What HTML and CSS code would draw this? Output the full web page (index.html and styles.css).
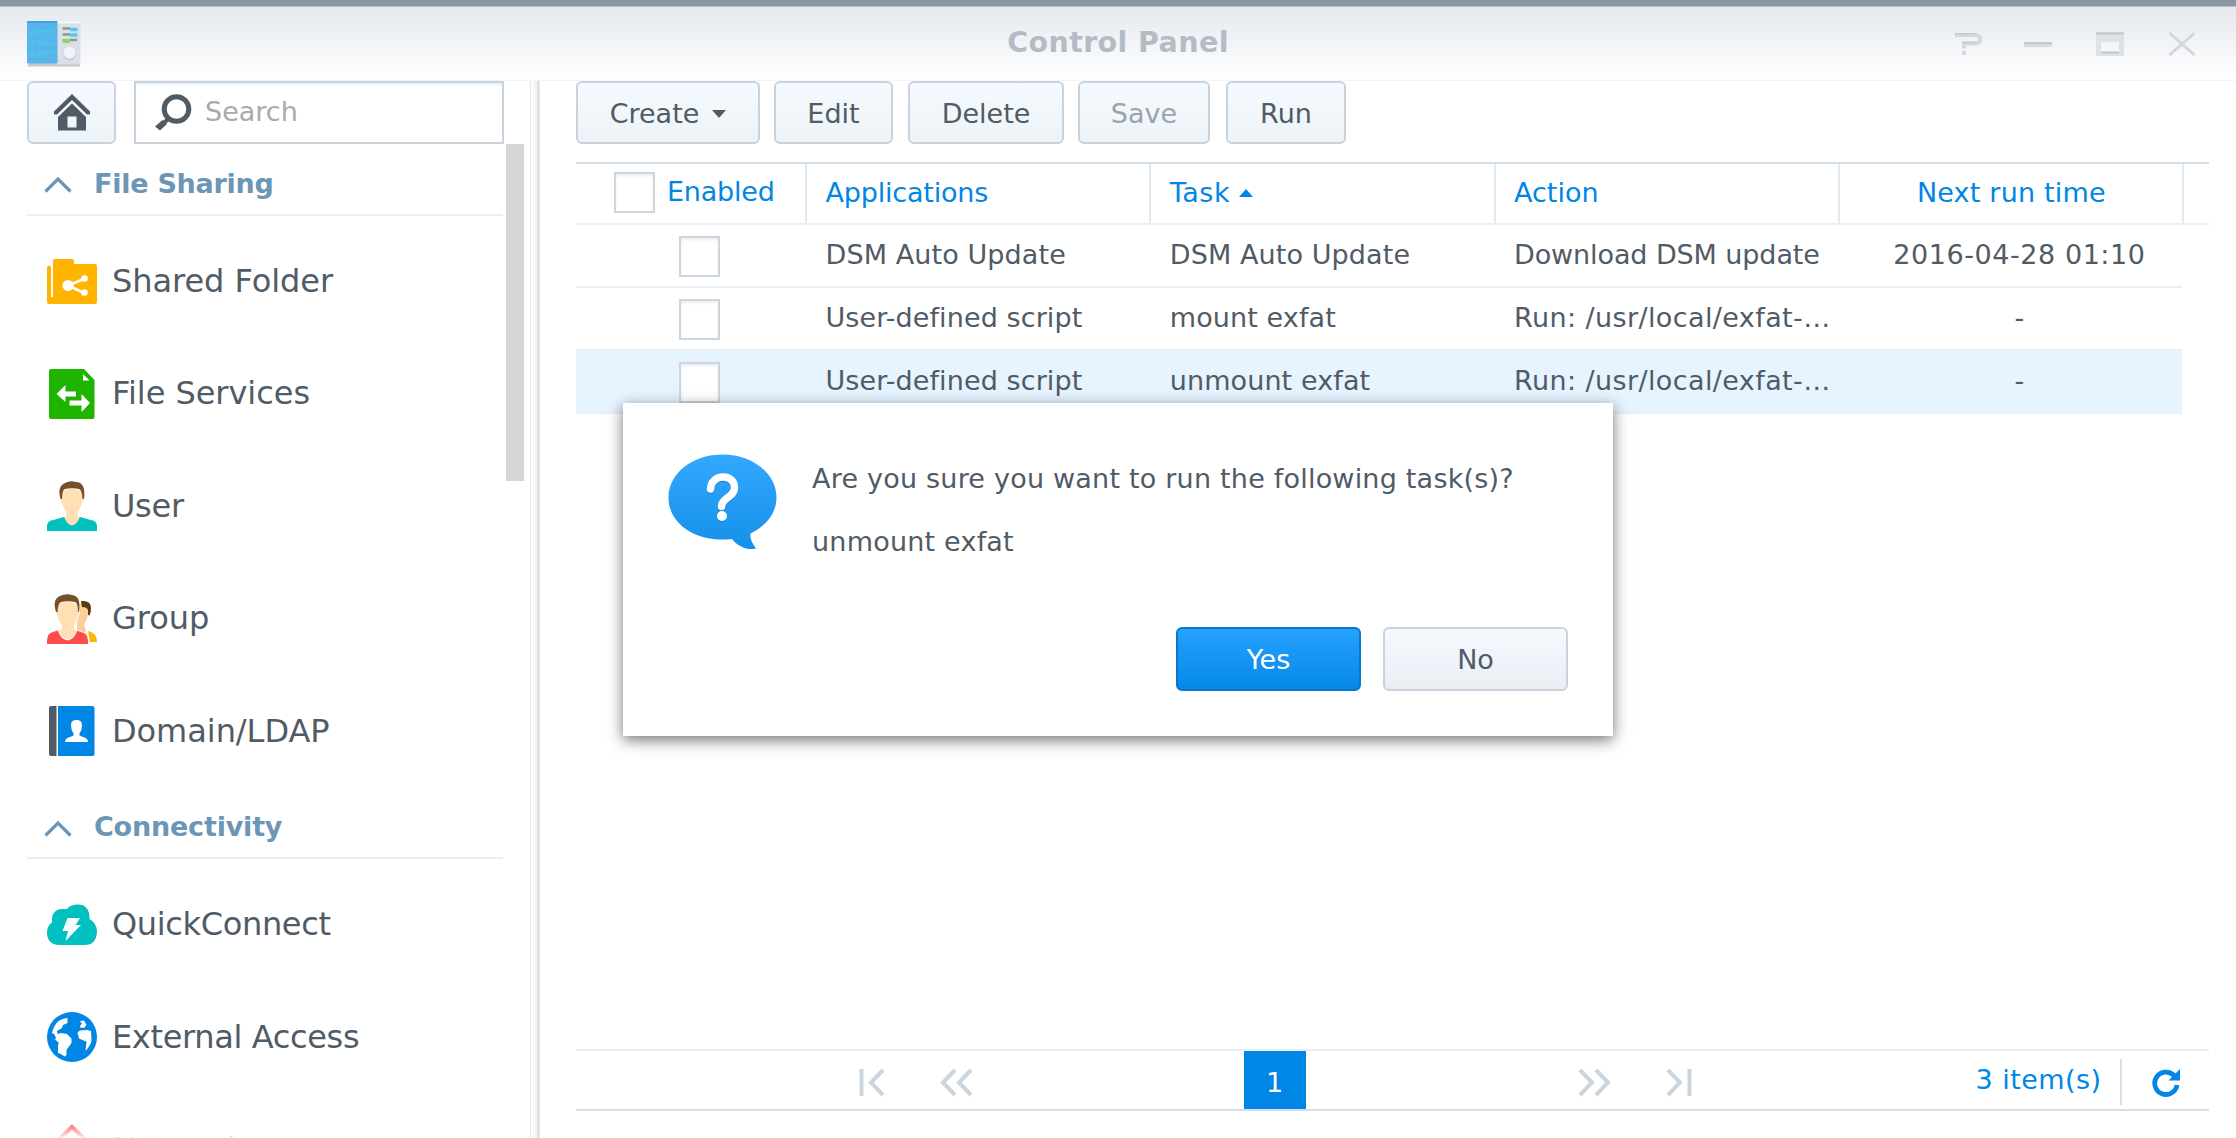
FILE: index.html
```html
<!DOCTYPE html>
<html lang="en">
<head>
<meta charset="utf-8">
<title>Control Panel</title>
<link rel="stylesheet" href="styles.css">
</head>
<body>
<header class="titlebar">
  <svg class="app-icon" viewBox="0 0 54 47">
    <rect x="1" y="43" width="52" height="3.500" rx="1.500" fill="#c3c6ca"/>
    <rect x="28" y="2" width="25.500" height="42.500" rx="1.500" fill="#dbe0e7"/>
    <rect x="28" y="1.500" width="25" height="2" fill="#f7f8fa"/>
    <rect x="0" y="1" width="30.500" height="42.500" rx="1" fill="#5ab4ec"/>
    <path d="M0 2h30" stroke="#41a3df" stroke-width="2"/>
    <g stroke="#45cbe8" stroke-width="1.600" fill="none">
      <path d="M2.500 12.500l2 2 3-4M10 11.500h16M10 14.500h6M2.500 22.500l2 2 3-4M10 21.500h11M10 24h16M10 35h6M10 32.500h16"/>
      <circle cx="4.500" cy="33.500" r="2"/>
    </g>
    <path d="M35.500 8.500h8M35.500 14.500h8M42.500 20h7.500" stroke="#8b96a1" stroke-width="2.600"/>
    <path d="M43 9.500h7.500M43 15h7.500" stroke="#4fcbe8" stroke-width="3.500"/>
    <path d="M35.500 21h7" stroke="#85d95f" stroke-width="4"/>
    <circle cx="42.500" cy="34" r="6.300" fill="#c3c9d0"/>
    <circle cx="42.500" cy="32.800" r="6" fill="#f0f4fa"/>
  </svg>
  <h1 class="title">Control Panel</h1>
  <div class="window-controls">
    <svg class="control" viewBox="0 0 28 24"><path d="M1 3h20a5 4 0 0 1 0 8.500H10v5M10 19v4" stroke="#d5d9dd" stroke-width="4" fill="none"/><path d="M1 1.800h20M8 10.500h13" stroke="#c3c7cb" stroke-width="1.600"/></svg>
    <svg class="control" viewBox="0 0 28 24"><path d="M0 12.500h28" stroke="#d9dcdf" stroke-width="5"/><path d="M0 11.200h28" stroke="#c3c7cb" stroke-width="2"/></svg>
    <svg class="control" viewBox="0 0 28 24"><path d="M0 0h28v24H0zM5 10v10h18V10z" fill="#dfe2e5" fill-rule="evenodd"/><path d="M0 1.500h28M5 20.500h18" stroke="#c3c7cb" stroke-width="2"/></svg>
    <svg class="control" viewBox="0 0 28 24"><path d="M1.500 1l25 22M26.500 1l-25 22" stroke="#d2d5d9" stroke-width="2.900"/></svg>
  </div>
</header>

<div class="window-body">
  <nav class="sidebar">
    <div class="sidebar-tools">
      <button class="btn home-btn">
        <svg class="home-icon" viewBox="0 0 36 37" fill="#505b66">
          <path d="M18 0L0 17.500v3h3L18 6l15 14.500h3v-3z"/>
          <path d="M18 9.500L4 23v13.500h28V23zM13.500 22.500h9v11h-9z" fill-rule="evenodd"/>
        </svg>
      </button>
      <div class="search">
        <svg class="search-icon" viewBox="0 0 37 37">
          <circle cx="21.500" cy="15" r="12.300" fill="none" stroke="#505b66" stroke-width="5"/>
          <path d="M7.500 26l4.500 4-7 6.500L0 32.500z" fill="#505b66"/><path d="M13 25l-7 7" stroke="#505b66" stroke-width="4"/>
        </svg>
        <span>Search</span>
      </div>
    </div>

    <div class="nav-list">
      <h2 class="group-title share-title"><svg class="chevron" viewBox="0 0 28 16"><path d="M1.500 14.500L14 2l12.500 12.500" fill="none" stroke="#6c96b6" stroke-width="3.200"/></svg>File Sharing</h2>
      <ul class="group">
        <li class="nav-item">
          <svg class="nav-icon" viewBox="0 0 50 50" fill="#ffb400">
            <path d="M0 12q0-2.500 2-2.500t2 2.500v29h2V5q0-2 2-2h17q2 0 2 2v3h21q2 0 2 2v36q0 2-2 2H2q-2 0-2-2z"/>
            <path d="M38 22.500L21 29.500l16 7.500" fill="none" stroke="#fff" stroke-width="2.600"/>
            <g fill="#fff"><circle cx="21" cy="29.500" r="5.500"/><circle cx="37.500" cy="22.500" r="3.300"/><circle cx="37.500" cy="36.500" r="3.300"/></g>
          </svg>Shared Folder</li>
        <li class="nav-item">
          <svg class="nav-icon" viewBox="0 0 50 50">
            <path d="M4 0h33l10.500 11v37q0 2-2 2H4q-2 0-2-2V2q0-2 2-2z" fill="#1eb400"/>
            <path d="M36 5l6.500 6.500H36z" fill="#fff"/>
            <path d="M9.500 25L18.500 16v6.500H29V27.500H18.500V33zM43 34L34.500 25v6.500H22.500V36.500H34.500V43z" fill="#fff"/>
          </svg>File Services</li>
        <li class="nav-item user-item">
          <svg class="nav-icon" viewBox="0 0 50 50">
            <path d="M0 50v-5q0-5 6-6l11-3 8 8.500 8-8.500 11 3q6 1 6 6v5z" fill="#00c0c0"/>
            <path d="M15 12q2-4 10-4t10 4q2 0 1.500 6-2.500 9-6 13v4l2 2q-3 7-7.500 7.500-4.500-.5-7.500-7.500l2-2v-4q-3.500-4-6-13-.5-6 1.500-6z" fill="#ffdfb3"/>
            <path d="M13.500 18Q10 5 18 2q5-3 11-1 10 0 8 17h-1.500Q35 9 32 8q-7-1.500-14 0-3 1-3 10z" fill="#75502a"/>
          </svg>User</li>
        <li class="nav-item">
          <svg class="nav-icon" viewBox="0 0 50 50">
            <path d="M34 7q8-1 8 7l-1 7q-2 7-4 9l2 7q-3 5-9 4V28z" fill="#fbcf96"/>
            <path d="M34 7q10-1 10 7 0 5-1.500 7.500L41 21v-5q-1-3-6-3z" fill="#5a3a14"/>
            <path d="M41 37q9 2 9 11h-7z" fill="#ffb400"/>
            <path d="M0 50v-3q0-8 6-9l6-2 8 8.500 8-8.500 6 2q7 1 7 9v3z" fill="#ff4b4b" stroke="#fff" stroke-width="1.500" paint-order="stroke"/>
            <path d="M10.500 12q2-4 10-4t10 4q2 0 1.500 6-2.500 9-5 13v4l2 2q-3 8-8.500 8.500-5.500-.5-8.500-8.500l3-2v-4q-3.500-4-6-13-.5-6 1.500-6z" fill="#ffdfb3" stroke="#fff" stroke-width="2" paint-order="stroke"/>
            <path d="M9 18Q5 5 13 2q6-3 12-1 9.500 1 7 17h-1Q31 9 28 8q-7-1.500-14 0-3 1-3.500 10z" fill="#75502a"/>
          </svg>Group</li>
        <li class="nav-item">
          <svg class="nav-icon" viewBox="0 0 50 50">
            <path d="M4 0h5.500v50H4q-2 0-2-2V2q0-2 2-2z" fill="#505b66"/>
            <path d="M11 0h34.500q2 0 2 2v46q0 2-2 2H11z" fill="#0086e5"/>
            <path d="M18 36q0-4 5-5l3.500-1.500v-2Q24 24 24 19q0-5 5.500-5t5.500 5q0 5-2.500 8.500v2L36 31q5 1 5 5z" fill="#fff"/>
          </svg>Domain/LDAP</li>
      </ul>
      <h2 class="group-title connect-title"><svg class="chevron" viewBox="0 0 28 16"><path d="M1.500 14.500L14 2l12.500 12.500" fill="none" stroke="#6c96b6" stroke-width="3.200"/></svg>Connectivity</h2>
      <ul class="group">
        <li class="nav-item quick-item">
          <svg class="nav-icon" viewBox="0 0 50 50">
            <path d="M12 46C4 46 0 40.500 0 34q0-7 5-10.500Q4 10.500 15 10h5Q23 5.500 31 5.500 43 6 42.500 20q7.500 4 7.500 13-1 13-12 13z" fill="#00c0c0"/>
            <path d="M20.500 19H33L28.500 26H34L18.500 42L21 32H15.500z" fill="#fff"/>
          </svg>QuickConnect</li>
        <li class="nav-item quick-item">
          <svg class="nav-icon" viewBox="0 0 50 50">
            <circle cx="25" cy="25" r="25" fill="#0086e5"/>
            <path d="M20.500 6Q8 7 5 21l2.500 1.500L9 26l-1 1.500L12 31l-1 2v8l3 1 3.500 2.500 2-1.500V38l5-7v-4.500L20 22l-6-1-3.500 1-.5-3 5-3 1-3 4.500-2zM30 6l2 1.500M33 9l4-.5L39.500 13 37 16l-4-.5.500-2.500L35 12zM33 18.500l-2.500 2 1.500 6 4.500 2 3 1L38.500 39Q44 33 44.500 28l-.5-9-4-1z" fill="#fff"/>
          </svg>External Access</li>
        <li class="nav-item">
          <svg class="nav-icon" viewBox="0 0 50 50"><path d="M25 3L2 25h6v22h34V25h6z" fill="none" stroke="#ff4b4b" stroke-width="4"/></svg>Network</li>
      </ul>
      <div class="scroll-thumb"></div>
      <div class="fade"></div>
    </div>
  </nav>
  <div class="splitter"></div>

  <main class="content">
    <div class="toolbar">
      <button class="btn create">Create<svg class="caret" viewBox="0 0 14 8"><path d="M0 0h14L7 8z" fill="#505b66"/></svg></button>
      <button class="btn edit">Edit</button>
      <button class="btn delete">Delete</button>
      <button class="btn save" disabled>Save</button>
      <button class="btn run">Run</button>
    </div>

    <div class="grid">
      <div class="grid-row grid-head">
        <div class="cell enabled"><span class="checkbox"></span>Enabled</div>
        <div class="cell apps">Applications</div>
        <div class="cell task">Task<svg class="sort" viewBox="0 0 14 8"><path d="M7 0l7 8H0z" fill="#0086e5"/></svg></div>
        <div class="cell">Action</div>
        <div class="cell time">Next run time</div>
      </div>
      <div class="grid-row">
        <div class="cell check"><span class="checkbox"></span></div>
        <div class="cell">DSM Auto Update</div>
        <div class="cell">DSM Auto Update</div>
        <div class="cell download">Download DSM update</div>
        <div class="cell time date">2016-04-28 01:10</div>
      </div>
      <div class="grid-row">
        <div class="cell check"><span class="checkbox"></span></div>
        <div class="cell">User-defined script</div>
        <div class="cell">mount exfat</div>
        <div class="cell command">Run: /usr/local/exfat-…</div>
        <div class="cell time">-</div>
      </div>
      <div class="grid-row selected">
        <div class="cell check"><span class="checkbox"></span></div>
        <div class="cell">User-defined script</div>
        <div class="cell">unmount exfat</div>
        <div class="cell command">Run: /usr/local/exfat-…</div>
        <div class="cell time">-</div>
      </div>
    </div>

    <footer class="pager">
      <div class="pager-nav prev">
        <svg class="page-icon" viewBox="0 0 26 27"><path d="M2.500 0v27M24 1L12 13.500 24 26" fill="none" stroke="#cbd5df" stroke-width="4"/></svg>
        <svg class="page-icon double" viewBox="0 0 33 27"><path d="M15 1L3 13.500 15 26M31 1L19 13.500 31 26" fill="none" stroke="#cbd5df" stroke-width="4"/></svg>
      </div>
      <span class="page">1</span>
      <div class="pager-nav next">
        <svg class="page-icon double" viewBox="0 0 33 27"><path d="M2 1l12 12.500L2 26M18 1l12 12.500L18 26" fill="none" stroke="#cbd5df" stroke-width="4"/></svg>
        <svg class="page-icon" viewBox="0 0 26 27"><path d="M2 1l12 12.500L2 26M23.500 0v27" fill="none" stroke="#cbd5df" stroke-width="4"/></svg>
      </div>
      <div class="status">
        <span class="count">3 item(s)</span>
        <span class="refresh"><svg class="refresh-icon" viewBox="0 0 28 27"><path d="M22 6.500A11.200 11.200 0 1 0 25 16" fill="none" stroke="#0086e5" stroke-width="4.800"/><path d="M28 0v11.500H16.500z" fill="#0086e5"/></svg></span>
      </div>
    </footer>
  </main>
</div>

<div class="dialog" role="dialog">
  <div class="dialog-body">
    <svg class="bubble" viewBox="0 0 109 96">
      <defs><linearGradient id="blue" x1="0" y1="0" x2="0" y2="1"><stop offset="0" stop-color="#33a8ff"/><stop offset="1" stop-color="#1590ea"/></linearGradient></defs>
      <path d="M54.500.5C84 .5 108.500 19 108.500 43.500c0 16-11 29-26 36-1 5 2 10 5.500 15-8 2-17-1-24-9.500C28 89 .5 70 .5 43.500.5 19 25 .5 54.500.5z" fill="url(#blue)"/>
      <path d="M42.500 36C43 20.500 67 20 66.500 35c0 9-13 10-13 19" fill="none" stroke="#1b86d2" stroke-width="7.500" stroke-linecap="round"/>
      <path d="M42.500 35C43 19.500 67 19 66.500 34c0 9-13 10-13 18.500" fill="none" stroke="#fff" stroke-width="7.500" stroke-linecap="round"/>
      <circle cx="54" cy="63" r="5" fill="#1b86d2"/><circle cx="54" cy="62" r="5" fill="#fff"/>
    </svg>
    <div class="message"><p>Are you sure you want to run the following task(s)?</p><p>unmount exfat</p></div>
  </div>
  <div class="dialog-actions">
    <button class="btn dialog-btn primary">Yes</button>
    <button class="btn dialog-btn">No</button>
  </div>
</div>
</body>
</html>
```
FILE: styles.css
```css
* { box-sizing: border-box; }

html, body { height: 100%; }

body {
  margin: 0;
  display: flex;
  flex-direction: column;
  overflow: hidden;
  background: #fff;
  color: #505b66;
  font: 27px/1.2 "DejaVu Sans", Verdana, sans-serif;
}

h1, h2, p, ul { margin: 0; padding: 0; }
ul { list-style: none; }
svg { display: block; flex: none; overflow: visible; }

/* Title bar */
.titlebar {
  flex: none;
  display: grid;
  grid-template-columns: 1fr auto 1fr;
  align-items: center;
  height: 81px;
  padding: 1px 40px 0 27px;
  border-top: 6px solid #8b959f;
  border-bottom: 1px solid #f0f5fb;
  background: linear-gradient(#e5e8ed, #f0f3f6 45%, #fdfdfe 92%, #fff);
  box-shadow: inset 0 1px #b8c0c8;
}
.app-icon { width: 54px; height: 47px; }
.title {
  padding: 0 0 1px 13px;
  font-size: 28.500px;
  line-height: 40px;
  letter-spacing: 0.400px;
  color: #b3bcc5;
}
.window-controls {
  justify-self: end;
  display: flex;
  gap: 44px;
}
.control { width: 28px; height: 24px; }
.control:first-child { margin-right: -2px; }

.window-body {
  flex: 1;
  min-height: 0;
  display: flex;
}

/* Buttons */
.btn {
  height: 63px;
  display: flex;
  align-items: center;
  justify-content: center;
  padding: 3px 0 0;
  border: 2px solid #c8d3de;
  border-radius: 6px;
  background: linear-gradient(#f5faff, #eef3f8);
  color: #505b66;
  font: inherit;
}
.btn:disabled { color: #9aa3ae; }

/* Sidebar */
.sidebar {
  width: 530px;
  flex: none;
  display: flex;
  flex-direction: column;
}
.sidebar-tools {
  display: flex;
  gap: 18px;
  padding: 0 26px 0 27px;
}
.home-btn { width: 89px; padding: 0; }
.home-icon { width: 36px; height: 37px; }
.search {
  flex: 1;
  display: flex;
  align-items: center;
  gap: 13px;
  padding: 0 0 1px 19px;
  border: 2px solid #c8d3de;
  box-shadow: inset 0 3px 3px -1px #eceff2;
  color: #aaa;
}
.search-icon { width: 37px; height: 37px; }

.nav-list {
  flex: 1;
  min-height: 0;
  position: relative;
  overflow: hidden;
  padding: 0 27px;
}
.group-title {
  display: flex;
  align-items: center;
  gap: 22px;
  height: 71.500px;
  padding: 10px 0 0 17px;
  border-bottom: 2px solid #e8eff5;
  color: #6c96b6;
  font-size: 27px;
}
.share-title { letter-spacing: -0.250px; }
.connect-title { letter-spacing: -0.200px; padding-top: 11px; }
.chevron { width: 28px; height: 16px; margin-top: 2px; }
.group { padding: 9.250px 0 0 20px; }
.nav-item {
  display: flex;
  align-items: center;
  gap: 15px;
  height: 112.500px;
  font-size: 32px;
  letter-spacing: -0.050px;
  white-space: nowrap;
}
.quick-item { letter-spacing: -0.350px; }
.user-item { letter-spacing: -0.300px; }
.nav-icon { width: 50px; height: 50px; }
.scroll-thumb {
  position: absolute;
  top: 0;
  right: 6px;
  width: 18px;
  height: 337px;
  background: #d4d6d8;
}
.fade {
  position: absolute;
  inset: auto 0 0;
  height: 14px;
  background: linear-gradient(rgba(255, 255, 255, 0.200), rgba(255, 255, 255, 0.900));
}
.splitter {
  width: 10px;
  flex: none;
  border-left: 1px solid #e8e8e8;
  background: linear-gradient(to right, #fff, #f3f3f3 60%, #d9d9d9 85%, #f3f3f3);
}

/* Main area */
.content {
  flex: 1;
  min-width: 0;
  display: flex;
  flex-direction: column;
  padding: 0 27px 27px 36px;
}
.toolbar { display: flex; gap: 14px; }
.create { width: 184px; gap: 13px; }
.caret { width: 14px; height: 8px; }
.edit { width: 119px; }
.delete { width: 156px; margin-left: 1px; }
.save { width: 132px; }
.run { width: 120px; margin-left: 2px; }

.grid {
  flex: 1;
  margin-top: 18px;
  border-top: 2px solid #d3dfea;
  letter-spacing: 0.100px;
}
.grid-row {
  display: grid;
  grid-template-columns: 231px repeat(4, 344.250px);
  width: 1606px;
  height: 63px;
  border-bottom: 2px solid #e8eff5;
}
.grid-head {
  width: auto;
  height: 60.500px;
  color: #0086e5;
  letter-spacing: 0;
}
.selected { background: #e6f4ff; }
.cell {
  display: flex;
  align-items: center;
  padding: 1px 0 0 18.500px;
  white-space: nowrap;
}
.grid-head .cell {
  padding-top: 0;
  padding-bottom: 1px;
  border-right: 2px solid #e0eaf5;
}
.grid-head .enabled { padding: 0 0 2px 38px; gap: 12px; letter-spacing: -0.200px; }
.grid-head .apps { letter-spacing: -0.200px; }
.grid-head .task { gap: 9px; letter-spacing: 0.500px; }
.check { padding: 2px 0 0 103px; }
.time { justify-content: center; padding-left: 15px; }
.grid-head .time { padding-left: 1px; letter-spacing: 0.200px; }
.download { letter-spacing: -0.100px; }
.command { letter-spacing: 0.400px; }
.date { letter-spacing: 0.560px; }
.sort { width: 14px; height: 8px; }
.checkbox {
  width: 41px;
  height: 41px;
  flex: none;
  border: 2px solid #cdd6df;
  background: #fff;
  box-shadow: inset 0 2px 3px #eceef0;
}

/* Pager */
.pager {
  height: 62px;
  flex: none;
  display: grid;
  grid-template-columns: 668px 62px 1fr auto;
  border-top: 2px solid #e8eff5;
  border-bottom: 2px solid #d3dfea;
}
.pager-nav { display: flex; align-items: center; padding-top: 5px; }
.prev { padding-left: 283px; gap: 55px; }
.next { padding-left: 272px; gap: 55px; }
.page-icon { width: 26px; height: 27px; }
.double { width: 33px; }
.page {
  display: flex;
  align-items: center;
  justify-content: center;
  padding: 6px 1px 0 0;
  background: #0086e5;
  color: #fff;
}
.status { display: flex; align-items: center; color: #0086e5; }
.count { padding: 0 18.500px 0 0; letter-spacing: 0.450px; line-height: 56px; }
.refresh {
  display: flex;
  align-items: center;
  height: 46px;
  padding-left: 30px;
  margin: 4px 29px 0 0;
  border-left: 2px solid #d8e1ea;
}
.refresh-icon { width: 28px; height: 27px; }

/* Confirmation dialog */
.dialog {
  position: absolute;
  left: 623px;
  top: 403px;
  width: 990px;
  height: 333px;
  display: flex;
  flex-direction: column;
  justify-content: space-between;
  padding: 51px 45px 45px;
  background: #fff;
  box-shadow: 0 4px 14px rgba(0, 0, 0, 0.550);
}
.dialog-body { display: flex; gap: 35px; }
.bubble { width: 109px; height: 96px; }
.message { margin-top: -7px; line-height: 63px; letter-spacing: 0.210px; }
.dialog-actions { display: flex; justify-content: flex-end; gap: 22px; }
.dialog-btn { width: 185px; height: 64px; background: linear-gradient(#f5faff, #eef2f8 65%, #e9eef3); }
.primary {
  border-color: #0a77cc;
  background: linear-gradient(#26a1ff, #0588e8);
  color: #fff;
}
```
